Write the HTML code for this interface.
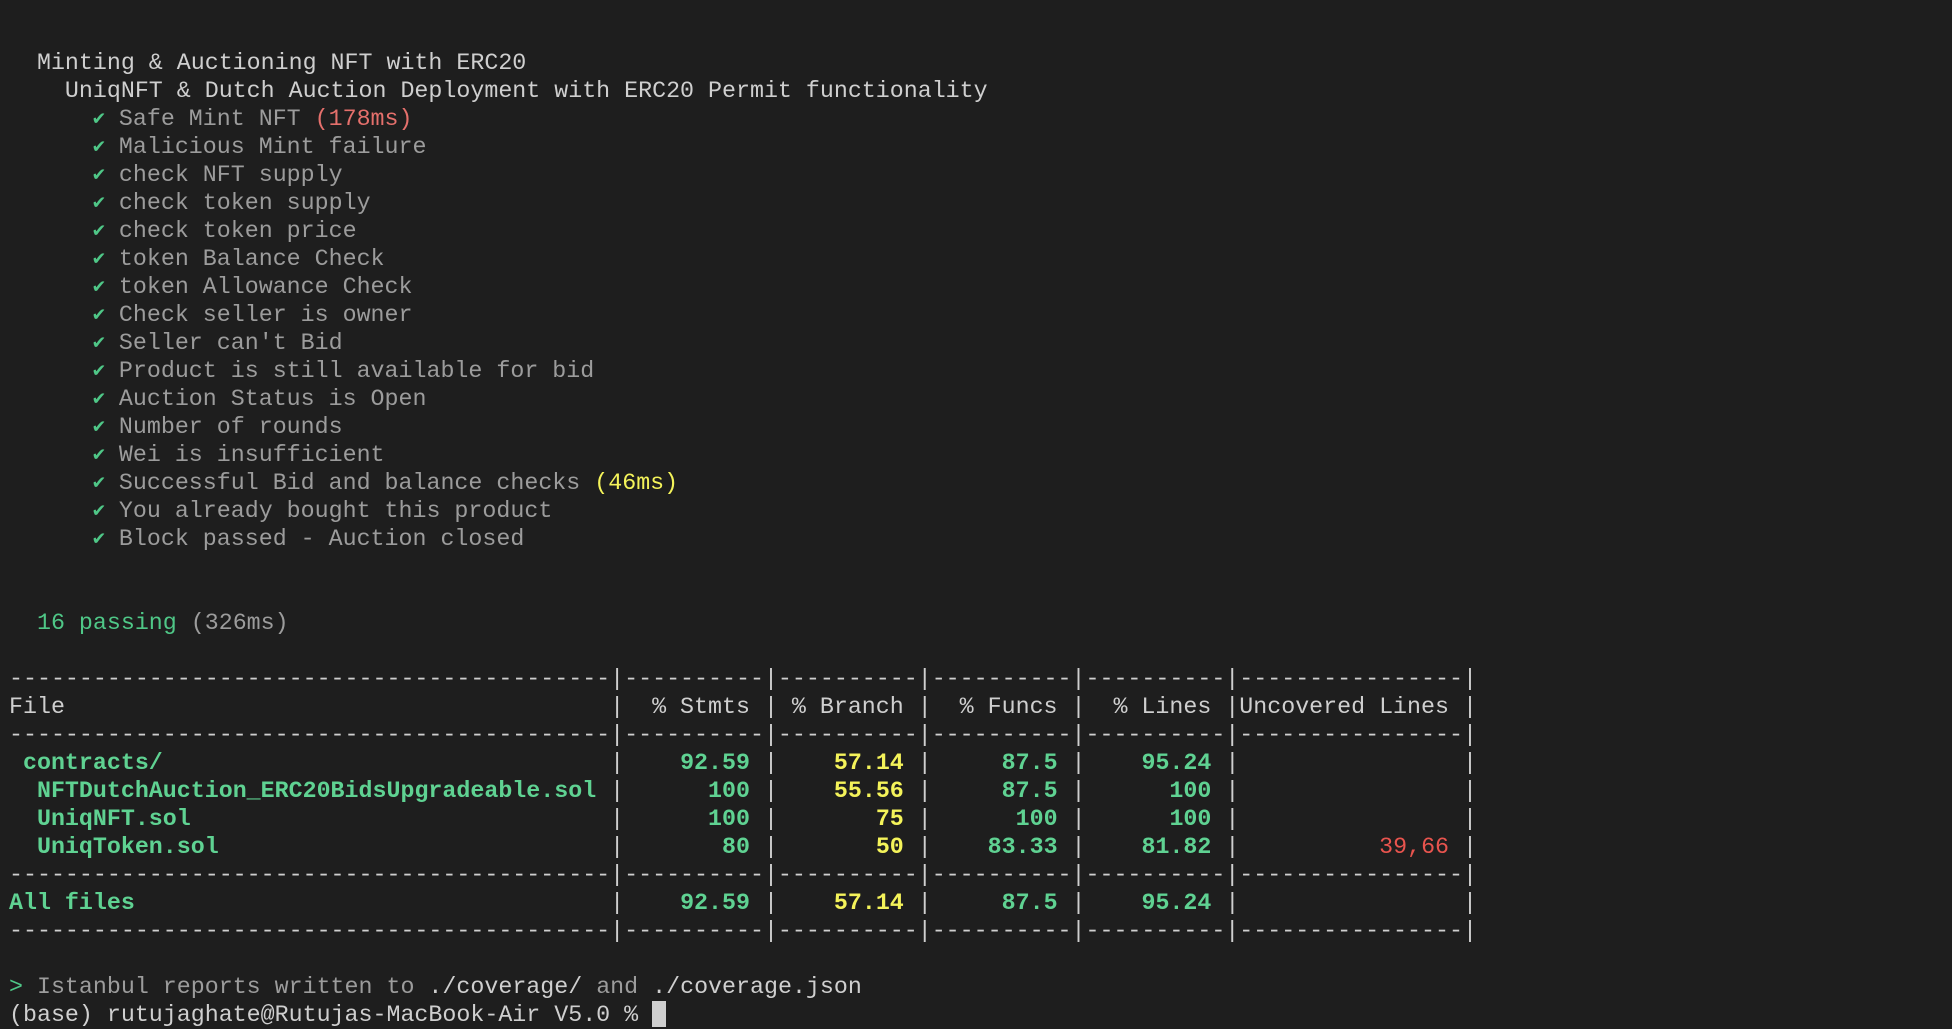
<!DOCTYPE html>
<html><head><meta charset="utf-8"><style>
html,body{margin:0;padding:0;background:#1e1e1e;}
body{width:1952px;height:1026px;overflow:hidden;}
pre{margin:0;padding:49px 0 0 9px;font-family:"Liberation Mono","DejaVu Sans Mono",monospace;font-size:23.3px;line-height:28px;color:#cfcfcf;white-space:pre;}
.d{color:#9c9c9c}
.g{color:#4fc787}
.gb{color:#5fd292;font-weight:bold}
.yb{color:#f4f35a;font-weight:bold}
.y{color:#f4f35a}
.r{color:#e5706c}
.rb{color:#e8544e}
.ck{display:inline-block;width:1ch;height:20px;line-height:20px;color:#4fc787;font-family:"DejaVu Sans Mono",monospace;font-size:20px;vertical-align:1px;overflow:visible}
.cur{display:inline-block;width:14px;height:26px;background:#cfcfcf;vertical-align:-6px}
</style></head><body><pre>  Minting &amp; Auctioning NFT with ERC20
    UniqNFT &amp; Dutch Auction Deployment with ERC20 Permit functionality
      <span class="ck">✔</span> <span class="d">Safe Mint NFT</span> <span class="r">(178ms)</span>
      <span class="ck">✔</span> <span class="d">Malicious Mint failure</span>
      <span class="ck">✔</span> <span class="d">check NFT supply</span>
      <span class="ck">✔</span> <span class="d">check token supply</span>
      <span class="ck">✔</span> <span class="d">check token price</span>
      <span class="ck">✔</span> <span class="d">token Balance Check</span>
      <span class="ck">✔</span> <span class="d">token Allowance Check</span>
      <span class="ck">✔</span> <span class="d">Check seller is owner</span>
      <span class="ck">✔</span> <span class="d">Seller can't Bid</span>
      <span class="ck">✔</span> <span class="d">Product is still available for bid</span>
      <span class="ck">✔</span> <span class="d">Auction Status is Open</span>
      <span class="ck">✔</span> <span class="d">Number of rounds</span>
      <span class="ck">✔</span> <span class="d">Wei is insufficient</span>
      <span class="ck">✔</span> <span class="d">Successful Bid and balance checks</span> <span class="y">(46ms)</span>
      <span class="ck">✔</span> <span class="d">You already bought this product</span>
      <span class="ck">✔</span> <span class="d">Block passed - Auction closed</span>


  <span class="g">16 passing</span> <span class="d">(326ms)</span>

-------------------------------------------|----------|----------|----------|----------|----------------|
File                                       |  % Stmts | % Branch |  % Funcs |  % Lines |Uncovered Lines |
-------------------------------------------|----------|----------|----------|----------|----------------|
 <span class="gb">contracts/</span>                                |    <span class="gb">92.59</span> |    <span class="yb">57.14</span> |     <span class="gb">87.5</span> |    <span class="gb">95.24</span> |                |
  <span class="gb">NFTDutchAuction_ERC20BidsUpgradeable.sol</span> |      <span class="gb">100</span> |    <span class="yb">55.56</span> |     <span class="gb">87.5</span> |      <span class="gb">100</span> |                |
  <span class="gb">UniqNFT.sol</span>                              |      <span class="gb">100</span> |       <span class="yb">75</span> |      <span class="gb">100</span> |      <span class="gb">100</span> |                |
  <span class="gb">UniqToken.sol</span>                            |       <span class="gb">80</span> |       <span class="yb">50</span> |    <span class="gb">83.33</span> |    <span class="gb">81.82</span> |          <span class="rb">39,66</span> |
-------------------------------------------|----------|----------|----------|----------|----------------|
<span class="gb">All files</span>                                  |    <span class="gb">92.59</span> |    <span class="yb">57.14</span> |     <span class="gb">87.5</span> |    <span class="gb">95.24</span> |                |
-------------------------------------------|----------|----------|----------|----------|----------------|

<span class="g">&gt;</span> <span class="d">Istanbul reports written to</span> ./coverage/ <span class="d">and</span> ./coverage.json
(base) rutujaghate@Rutujas-MacBook-Air V5.0 % <span class="cur"></span></pre></body></html>
